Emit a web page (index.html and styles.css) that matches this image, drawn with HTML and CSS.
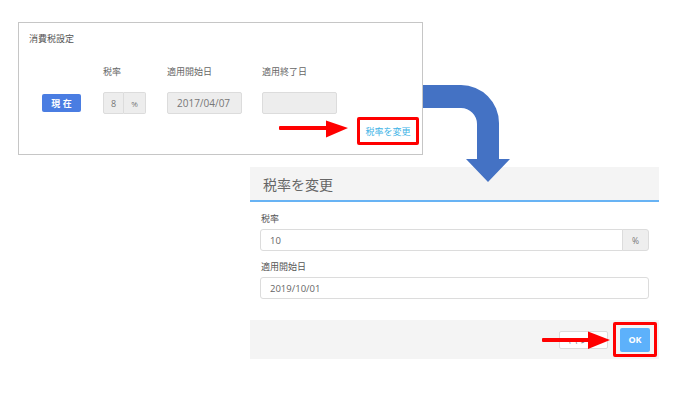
FILE: index.html
```html
<!DOCTYPE html>
<html lang="ja">

<head>
    <meta charset="UTF-8">
    <meta name="viewport" content="width=device-width, initial-scale=1.0">
    <title>消費税設定</title>
    <link rel="stylesheet" href="styles.css">
</head>

<body>
    <div class="page">
        <!-- Before: current tax setting card -->
        <section class="tax-card">
            <h3 class="card-title">消費税設定</h3>
            <div class="rate-grid">
                <span></span>
                <span class="col-label">税率</span>
                <span class="col-label">適用開始日</span>
                <span class="col-label">適用終了日</span>

                <button class="current-btn">現 在</button>
                <div class="rate-group">
                    <span class="rate-value">8</span>
                    <span class="rate-addon">%</span>
                </div>
                <span class="date-box">2017/04/07</span>
                <span class="date-box"></span>
            </div>
            <div class="card-actions">
                <a href="#" class="change-link">税率を変更</a>
            </div>
        </section>

        <!-- After: change dialog -->
        <section class="dialog">
            <header class="dialog-header">
                <h2>税率を変更</h2>
            </header>
            <div class="dialog-body">
                <label class="field-label">税率</label>
                <div class="field-group">
                    <span class="field-input">10</span>
                    <span class="field-addon">%</span>
                </div>
                <label class="field-label">適用開始日</label>
                <div class="field-group">
                    <span class="field-input">2019/10/01</span>
                </div>
            </div>
            <footer class="dialog-footer">
                <button class="cancel-btn">キャンセル</button>
                <span class="ok-frame"><button class="ok-btn">OK</button></span>
            </footer>
        </section>

        <!-- annotation arrows -->
        <svg class="overlay" width="700" height="394" viewBox="0 0 700 394">
            <path d="M423,85 H461 A38,38 0 0 1 499,123 V159 H510 L488,182 L466,159 H477 V124 A16,16 0 0 0 461,108 H423 Z" fill="#4472c4"/>
            <rect x="279" y="126" width="48" height="4" rx="1" fill="#f00"/>
            <path d="M326,120.5 L348,128 L326,137.5 Z" fill="#f00"/>
            <rect x="542" y="338" width="47" height="4" rx="1" fill="#f00"/>
            <path d="M588,331.5 L610,340 L588,349 Z" fill="#f00"/>
        </svg>
    </div>
</body>

</html>
```

FILE: styles.css
```css
body {
    margin: 0;
    background: #ffffff;
    font-family: 'Open Sans', 'Noto Sans CJK JP', sans-serif;
    color: #555;
}

.page {
    position: relative;
    width: 700px;
    height: 394px;
    padding-top: 22px;
    box-sizing: border-box;
}

/* Card */
.tax-card {
    margin-left: 18px;
    width: 405px;
    height: 133px;
    box-sizing: border-box;
    border: 1px solid #c6c6c6;
    padding: 10px 3px 0 10px;
}

.card-title {
    margin: 0;
    font-size: 9px;
    font-weight: 400;
    line-height: 12px;
    color: #555;
}

.rate-grid {
    display: grid;
    grid-template-columns: 61px 64px 95px 80px;
    grid-template-rows: 12px 22px;
    row-gap: 14px;
    align-items: center;
    margin: 21px 0 0 13px;
}

.col-label {
    font-size: 9px;
    line-height: 12px;
    color: #666;
}

.current-btn {
    width: 39px;
    height: 18px;
    padding: 0;
    border: none;
    border-radius: 2px;
    background: #4a7de2;
    color: #fff;
    font-family: inherit;
    font-size: 9px;
    font-weight: 700;
}

.rate-group {
    display: flex;
    height: 22px;
}

.rate-value,
.rate-addon,
.date-box {
    display: flex;
    align-items: center;
    box-sizing: border-box;
    height: 22px;
    border: 1px solid #dcdcdc;
    background: #ededed;
    color: #777;
    font-size: 9px;
}

.rate-value {
    width: 21px;
    justify-content: center;
    border-radius: 2px 0 0 2px;
}

.rate-addon {
    width: 22px;
    justify-content: center;
    border-left: none;
    border-radius: 0 2px 2px 0;
    font-size: 8px;
}

.date-box {
    width: 75px;
    padding-left: 9px;
    border-radius: 2px;
    font-size: 10px;
}

.card-actions {
    display: flex;
    justify-content: flex-end;
    margin-top: 3px;
}

.change-link {
    display: flex;
    align-items: center;
    justify-content: center;
    width: 62px;
    height: 28px;
    box-sizing: border-box;
    border: 3px solid #f00;
    border-radius: 2px;
    color: #3db3e6;
    font-size: 9px;
    text-decoration: none;
}

/* Dialog */
.dialog {
    margin: 12px 0 0 250px;
    width: 409px;
}

.dialog-header {
    height: 33px;
    display: flex;
    align-items: center;
    padding-left: 13px;
    background: #f4f4f4;
    border-bottom: 2px solid #68b3f4;
}

.dialog-header h2 {
    margin: 0;
    font-size: 14px;
    font-weight: 400;
    color: #666;
}

.dialog-body {
    display: flex;
    flex-direction: column;
    padding: 11px 10px 21px 10px;
    background: #fff;
}

.field-label {
    font-size: 9px;
    line-height: 12px;
    color: #555;
    margin: 0 0 4px 1px;
}

.field-group {
    display: flex;
    height: 22px;
    margin-bottom: 10px;
}

.field-group:last-child {
    margin-bottom: 0;
}

.field-input {
    flex-grow: 1;
    display: flex;
    align-items: center;
    padding-left: 9px;
    border: 1px solid #dcdcdc;
    border-radius: 3px;
    font-size: 9.5px;
    color: #666;
}

.field-input + .field-addon {
    margin-left: -1px;
}

.field-group .field-input:not(:last-child) {
    border-radius: 3px 0 0 3px;
}

.field-addon {
    display: flex;
    align-items: center;
    justify-content: center;
    width: 25px;
    border: 1px solid #dcdcdc;
    border-radius: 0 3px 3px 0;
    background: #eeeeee;
    color: #777;
    font-size: 8.5px;
}

.dialog-footer {
    height: 39px;
    display: flex;
    align-items: center;
    justify-content: flex-end;
    gap: 5px;
    padding-right: 2px;
    background: #f4f4f4;
}

.cancel-btn {
    width: 49px;
    height: 18px;
    padding: 0;
    border: 1px solid #dcdcdc;
    border-radius: 2px;
    background: #fff;
    color: #666;
    font-family: inherit;
    font-size: 7px;
}

.ok-frame {
    display: flex;
    align-items: center;
    justify-content: center;
    width: 44px;
    height: 35px;
    box-sizing: border-box;
    border: 3px solid #f00;
    border-radius: 2px;
}

.ok-btn {
    width: 30px;
    height: 24px;
    padding: 0;
    border: none;
    border-radius: 2px;
    background: #5db1fb;
    color: #fff;
    font-family: inherit;
    font-size: 9px;
    font-weight: 700;
}

.overlay {
    position: absolute;
    left: 0;
    top: 0;
    pointer-events: none;
}
```
